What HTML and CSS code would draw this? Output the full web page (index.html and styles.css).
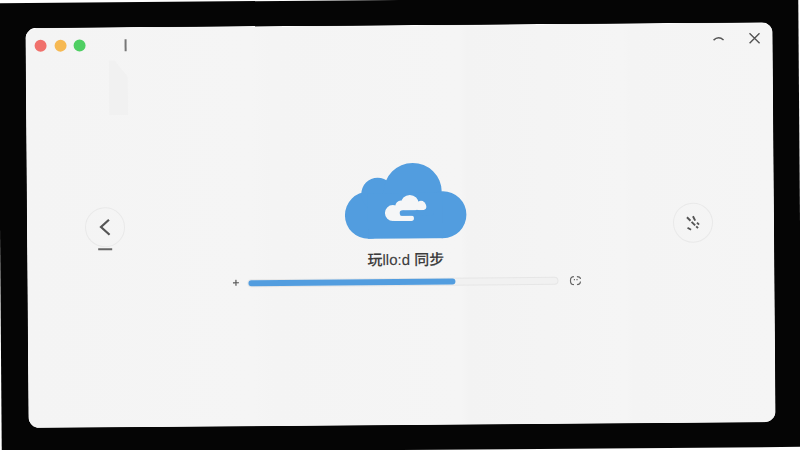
FILE: index.html
```html
<!DOCTYPE html>
<html lang="en">

<head>
    <meta charset="UTF-8">
    <meta name="viewport" content="width=device-width, initial-scale=1.0">
    <title>sync</title>
    <link rel="stylesheet" href="styles.css">
</head>

<body>

    <div class="frame">
        <div class="window">
            <div class="ghost"></div>

            <div class="titlebar">
                <div class="lights">
                    <span class="light red"></span>
                    <span class="light yellow"></span>
                    <span class="light green"></span>
                </div>
                <span class="caret"></span>
                <div class="controls">
                    <svg class="ctl" width="12" height="6" viewBox="0 0 12 6">
                        <path d="M1 4.6 Q6 0 11 4.6"></path>
                    </svg>
                    <svg class="ctl" width="12" height="12" viewBox="0 0 12 12">
                        <path d="M1 1 L11 11 M11 1 L1 11"></path>
                    </svg>
                </div>
            </div>

            <div class="main">
                <div class="nav">
                    <div class="round">
                        <svg class="chevron" width="12" height="18" viewBox="0 0 12 18">
                            <path d="M10 1.5 L2 8.7 L10.5 16.5"></path>
                        </svg>
                    </div>
                    <span class="nav_dash"></span>
                </div>

                <div class="center">
                    <svg class="cloud" width="122" height="76" viewBox="0 0 122 76">
                        <g fill="#529ddf">
                            <circle cx="23.5" cy="52" r="23.5"></circle>
                            <circle cx="33" cy="31" r="16.5"></circle>
                            <circle cx="68" cy="29" r="29"></circle>
                            <circle cx="98" cy="52" r="23.5"></circle>
                            <rect x="23" y="30" width="75" height="45.5"></rect>
                        </g>
                        <g fill="#f5f6f7">
                            <circle cx="48" cy="50" r="8"></circle>
                            <circle cx="56" cy="43" r="5.5"></circle>
                            <circle cx="65" cy="41" r="9"></circle>
                            <circle cx="76" cy="43" r="5"></circle>
                            <rect x="70" y="41" width="11.5" height="6" rx="3"></rect>
                            <rect x="48" y="52.7" width="21" height="5.3" rx="2.6"></rect>
                        </g>
                        <path d="M57.5 50 H86" stroke="#529ddf" stroke-width="5.4" stroke-linecap="round" fill="none"></path>
                    </svg>

                    <div class="label">玩llo:d 同步</div>

                    <div class="progress">
                        <svg class="small_icon" width="7" height="7" viewBox="0 0 7 7">
                            <path d="M0.5 3.5 H6.5 M3.5 0.5 V6.5"></path>
                        </svg>
                        <div class="track">
                            <div class="fill" style="width:66.9%"></div>
                        </div>
                        <svg class="small_icon sync" width="12" height="10" viewBox="0 0 12 10">
                            <path d="M4.5 1 Q1 1 1 5 Q1 9 4.5 9 M7.5 1 Q11 1 11 3.5 M11 6 Q11 9 7.5 9 M5 3.4 V4.6 M7.6 3.4 V4.6"></path>
                        </svg>
                    </div>
                </div>

                <div class="nav">
                    <div class="round">
                        <svg class="slashes" width="18" height="18" viewBox="0 0 18 18">
                            <path d="M3 3.5 L14 14.5 M9 2.5 L11.5 7.5 M3.5 14 L7 16 M13 9 L15 11"></path>
                        </svg>
                    </div>
                    <span class="nav_spacer"></span>
                </div>
            </div>
        </div>
    </div>

</body>

</html>
```

FILE: styles.css
```css
html,
body {
    height: 100%;
}

body {
    margin: 0;
    background-color: #fff;
    font-family: "Liberation Sans", "Noto Sans CJK SC", sans-serif;
    overflow: hidden;
}

.frame {
    width: 100%;
    height: 100%;
    padding-left: 1px;
    box-sizing: border-box;
    display: flex;
    justify-content: center;
    align-items: center;
    background-color: #050505;
    transform: rotate(-0.45deg);
}

.window {
    position: relative;
    width: 747px;
    height: 400px;
    display: flex;
    flex-direction: column;
    box-sizing: border-box;
    border-radius: 11px;
    border-top: 1px solid #fff;
    background-color: #f5f5f5;
    background-image: linear-gradient(90deg,
            #f4f4f4 0, #f5f5f5 30%, #f4f4f4 33%, #f5f5f5 58%, #f3f3f3 59%, #f5f5f5 80%, #f4f4f4 81%, #f5f5f5 100%);
}

.ghost {
    position: absolute;
    left: 83px;
    top: 32px;
    width: 19px;
    height: 55px;
    background: #f1f1f1;
    clip-path: polygon(0 0, 30% 0, 100% 30%, 100% 100%, 0 100%);
}

.titlebar {
    display: flex;
    align-items: center;
    padding: 11px 12px 0 9px;
}

.lights {
    display: flex;
    gap: 7.5px;
}

.light {
    width: 12px;
    height: 12px;
    border-radius: 50%;
}

.red {
    background: #f0716c;
}

.yellow {
    background: #f6b953;
}

.green {
    background: #4fcf63;
}

.caret {
    width: 2px;
    height: 12px;
    margin-left: 38.5px;
    background: #777;
}

.controls {
    margin-left: auto;
    margin-top: -4px;
    display: flex;
    align-items: center;
    gap: 24px;
}

.ctl {
    fill: none;
    stroke: #555;
    stroke-width: 1.4;
}

.main {
    flex: 1;
    display: flex;
    justify-content: space-between;
    align-items: center;
    padding: 0 61px 21px 58px;
}

.nav {
    display: flex;
    flex-direction: column;
    align-items: center;
    gap: 1px;
}

.nav_dash,
.nav_spacer {
    width: 14px;
    height: 2px;
}

.nav_dash {
    background: #666;
}

.round {
    width: 38px;
    height: 38px;
    display: flex;
    justify-content: center;
    align-items: center;
    border: 1px solid #e9e9e9;
    border-radius: 50%;
}

.chevron {
    fill: none;
    stroke: #555;
    stroke-width: 2.2;
}

.slashes {
    fill: none;
    stroke: #555;
    stroke-width: 1.9;
    stroke-dasharray: 5 1.5;
}

.center {
    margin-left: 13px;
    padding-bottom: 4px;
    display: flex;
    flex-direction: column;
    align-items: center;
}

.cloud {
    display: block;
}

.label {
    margin-top: 12px;
    font-size: 15px;
    line-height: 18px;
    font-weight: 500;
    color: #3c3c3c;
    -webkit-text-stroke: 0.1px #3c3c3c;
}

.progress {
    margin-top: 8px;
    margin-left: 2px;
    display: flex;
    align-items: center;
    gap: 8px;
}

.small_icon {
    fill: none;
    stroke: #555;
    stroke-width: 1.2;
}

.sync {
    margin-left: 3px;
    stroke: #666;
}

.track {
    width: 311px;
    height: 8px;
    box-sizing: border-box;
    border: 1px solid #e6e6e6;
    border-radius: 4px;
    background: #f1f1f1;
}

.fill {
    height: 6px;
    border-radius: 3px;
    background: #529ddf;
}
```
